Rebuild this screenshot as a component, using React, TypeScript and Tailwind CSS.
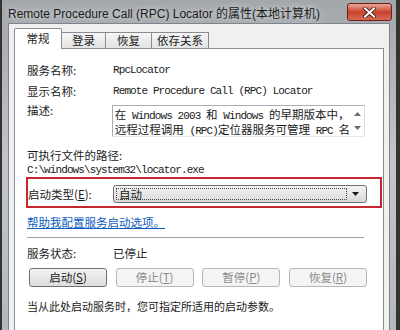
import type { ReactNode } from "react";

const cjk = "font-['Microsoft_YaHei','Noto_Sans_CJK_SC',sans-serif]";

function M({ children }: { children: ReactNode }) {
  return (
    <span className="font-['Liberation_Mono',monospace] text-[11px] tracking-[-0.9px]">
      {children}
    </span>
  );
}

function Button({ label, k, disabled }: { label: string; k: string; disabled?: boolean }) {
  return (
    <div
      className={`flex h-[19px] w-[78px] items-center justify-center rounded-[3px] border text-[11.5px] leading-[15px] ${
        disabled
          ? "border-[#b5b8bb] bg-[#f4f4f4] text-[#8a8a8a]"
          : "border-[#707070] bg-gradient-to-b from-[#f4f4f4] to-[#dcdcdc] text-[#1a1a1a]"
      }`}
    >
      {label}(<span className="underline">{k}</span>)
    </div>
  );
}

export default function App() {
  return (
    <div className={`flex h-[330px] w-[400px] overflow-hidden bg-[#34332e] ${cjk}`}>
      <div className="ml-[2px] flex h-full w-[394px] flex-col bg-gradient-to-b from-[#a3a7ac] via-[#c2c6ca] to-[#b3b8bd]">
        {/* title bar */}
        <div className="flex h-[28px] items-start pl-[6px] pr-[4px]">
          <div className="flex-1 whitespace-nowrap pt-[5px] text-[12px] leading-[18px] text-[#1b1b1b] font-['Liberation_Sans','Noto_Sans_CJK_SC',sans-serif] [text-shadow:0_0_6px_#eef0f2]">
            Remote Procedure Call (RPC) Locator 的属性(本地计算机)
          </div>
          <div className="mt-[3px] flex h-[18px] w-[45px] items-center justify-center rounded-[3px] border border-[#6b2018] bg-gradient-to-b from-[#e9a596] via-[#c8412d] to-[#d76a55]">
            <svg width="13" height="11" viewBox="0 0 13 11">
              <path
                d="M2 1.5 L11 9.5 M11 1.5 L2 9.5"
                stroke="#3a1410"
                strokeWidth="3.6"
                strokeLinecap="square"
              />
              <path
                d="M2 1.5 L11 9.5 M11 1.5 L2 9.5"
                stroke="#ffffff"
                strokeWidth="2"
                strokeLinecap="square"
              />
            </svg>
          </div>
        </div>

        {/* body */}
        <div className="mx-[6px] flex-1 border border-b-0 border-[#7c858e] bg-[#f0f0f0] px-[5px] pt-[4px]">
          {/* tabs */}
          <div className="relative z-10 -mb-px flex h-[21px] items-end text-[11.5px] text-[#1a1a1a]">
            <div className="flex h-[21px] w-[48px] items-center justify-center rounded-t-[2px] border border-b-0 border-[#898c95] bg-white">
              常规
            </div>
            <div className="flex h-[17px] w-[44px] items-center justify-center border border-l-0 border-[#898c95] bg-gradient-to-b from-[#f5f5f5] to-[#e3e3e3]">
              登录
            </div>
            <div className="flex h-[17px] w-[46px] items-center justify-center border border-l-0 border-[#898c95] bg-gradient-to-b from-[#f5f5f5] to-[#e3e3e3]">
              恢复
            </div>
            <div className="flex h-[17px] w-[57px] items-center justify-center border border-l-0 border-[#898c95] bg-gradient-to-b from-[#f5f5f5] to-[#e3e3e3]">
              依存关系
            </div>
          </div>

          {/* panel */}
          <div className="h-[300px] border border-[#898c95] bg-white pl-[12px] pr-[16px] pt-[13px] text-[11.5px] text-[#1a1a1a]">
            <div className="flex h-[16px] items-center leading-[16px]">
              <div className="w-[86px]">服务名称:</div>
              <M>RpcLocator</M>
            </div>
            <div className="mt-[5px] flex h-[16px] items-center leading-[16px]">
              <div className="w-[86px]">显示名称:</div>
              <M>Remote Procedure Call (RPC) Locator</M>
            </div>

            <div className="mt-[6px] flex">
              <div className="-mt-[3px] w-[86px] leading-[16px]">描述:</div>
              <div className="mr-[2px] flex h-[32px] flex-1 border border-[#abadb3] border-b-[#e3e9ef] border-r-[#dbdfe6] bg-white">
                <div className="flex-1 whitespace-nowrap pl-[2px] pt-[2px] text-[11.5px] leading-[13px]">
                  <div>
                    在<M> Windows 2003 </M>和<M> Windows </M>的早期版本中，
                  </div>
                  <div>
                    远程过程调用<M> (RPC)</M>定位器服务可管理<M> RPC </M>名
                  </div>
                </div>
                <div className="flex w-[14px] flex-col items-center justify-between py-[6px]">
                  <svg width="7" height="4" viewBox="0 0 7 4">
                    <path d="M0 4 L3.5 0 L7 4 Z" fill="#6d6d6d" />
                  </svg>
                  <svg width="7" height="4" viewBox="0 0 7 4">
                    <path d="M0 0 L3.5 4 L7 0 Z" fill="#6d6d6d" />
                  </svg>
                </div>
              </div>
            </div>

            <div className="mt-[10px] h-[16px] leading-[16px]">可执行文件的路径:</div>
            <div className="flex h-[14px] items-center leading-[14px]">
              <M>C:\windows\system32\locator.exe</M>
            </div>

            {/* red highlight */}
            <div className="-ml-px -mr-[15px] flex items-center border-2 border-[#c8262e] pb-[3px] pr-[13px] pt-[6px]">
              <div className="w-[85px] leading-[16px]">
                启动类型(<span className="underline">E</span>):
              </div>
              <div className="flex h-[18px] flex-1 items-center rounded-[3px] border border-[#707070] bg-gradient-to-b from-[#f3f3f3] to-[#d9d9d9] p-[2px]">
                <div className="flex h-full flex-1 items-center border border-dotted border-[#4a4a4a] pl-[2px] leading-[12px]">
                  自动
                </div>
                <div className="flex w-[17px] justify-center">
                  <svg width="7" height="4" viewBox="0 0 7 4">
                    <path d="M0 0 L3.5 4 L7 0 Z" fill="#1a1a1a" />
                  </svg>
                </div>
              </div>
            </div>

            <div className="mt-[6px] h-[16px] leading-[16px] text-[#0b5cbf] underline">
              帮助我配置服务启动选项。
            </div>

            <div className="mr-[3px] mt-[7px] h-px bg-[#a0a0a0]" />

            <div className="mt-[7px] flex h-[16px] items-center leading-[16px]">
              <div className="w-[86px]">服务状态:</div>
              <div>已停止</div>
            </div>

            <div className="ml-[2px] mt-[7px] flex justify-between">
              <Button label="启动" k="S" />
              <Button label="停止" k="T" disabled />
              <Button label="暂停" k="P" disabled />
              <Button label="恢复" k="R" disabled />
            </div>

            <div className="mt-[11px] h-[16px] text-[11px] leading-[16px]">
              当从此处启动服务时，您可指定所适用的启动参数。
            </div>
          </div>
        </div>
      </div>
    </div>
  );
}
